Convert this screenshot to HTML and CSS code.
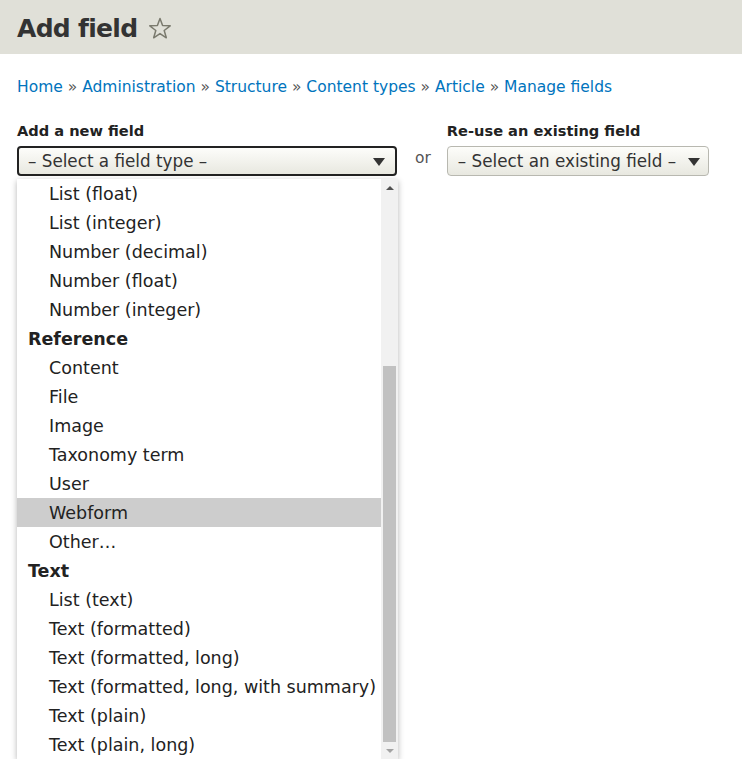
FILE: index.html
```html
<!DOCTYPE html>
<html>
<head>
<meta charset="utf-8">
<link rel="stylesheet" href="styles.css">
</head>
<body>
<header class="page-header">
  <h1 class="title">Add field</h1>
  <svg class="star" width="26" height="26" viewBox="0 0 26 26"><path d="M13 2.5 L15.6 9.6 L23.2 9.8 L17.2 14.5 L19.3 21.8 L13 17.6 L6.7 21.8 L8.8 14.5 L2.8 9.8 L10.4 9.6 Z" fill="none" stroke="#7a7a6e" stroke-width="1.5" stroke-linejoin="round"/></svg>
</header>
<main class="content">
  <nav class="breadcrumb">
    <a href="#">Home</a> » <a href="#">Administration</a> » <a href="#">Structure</a> » <a href="#">Content types</a> » <a href="#">Article</a> » <a href="#">Manage fields</a>
  </nav>
  <div class="form-row">
    <div class="field new-field">
      <label class="label">Add a new field</label>
      <div class="select focused">
        <span>– Select a field type –</span>
        <span class="arrow"></span>
      </div>
      <div class="listbox">
        <ul class="options">
          <li class="opt">List (float)</li>
          <li class="opt">List (integer)</li>
          <li class="opt">Number (decimal)</li>
          <li class="opt">Number (float)</li>
          <li class="opt">Number (integer)</li>
          <li class="group">Reference</li>
          <li class="opt">Content</li>
          <li class="opt">File</li>
          <li class="opt">Image</li>
          <li class="opt">Taxonomy term</li>
          <li class="opt">User</li>
          <li class="opt hl">Webform</li>
          <li class="opt">Other…</li>
          <li class="group">Text</li>
          <li class="opt">List (text)</li>
          <li class="opt">Text (formatted)</li>
          <li class="opt">Text (formatted, long)</li>
          <li class="opt">Text (formatted, long, with summary)</li>
          <li class="opt">Text (plain)</li>
          <li class="opt">Text (plain, long)</li>
        </ul>
        <div class="scrollbar">
          <span class="sb-up"></span>
          <div class="sb-track"><div class="sb-thumb"></div></div>
          <span class="sb-down"></span>
        </div>
      </div>
    </div>
    <div class="or">or</div>
    <div class="field existing-field">
      <label class="label">Re-use an existing field</label>
      <div class="select plain">
        <span>– Select an existing field –</span>
        <span class="arrow"></span>
      </div>
    </div>
  </div>
</main>
</body>
</html>
```
FILE: styles.css
```css
* { box-sizing: border-box; }
body {
  margin: 0;
  background: #fff;
  font-family: "DejaVu Sans", Verdana, sans-serif;
  color: #222;
}
.page-header {
  background: #e0e0d8;
  height: 54px;
  display: flex;
  align-items: center;
  padding: 3px 17px 0;
  gap: 10px;
}
.title {
  margin: 0;
  font-size: 25px;
  font-weight: bold;
  color: #333;
  letter-spacing: -0.7px;
}
.content { padding: 22px 17px 0; }
.breadcrumb {
  font-size: 15.5px;
  color: #555;
  line-height: 20px;
  margin-top: 1px;
}
.breadcrumb a { color: #0074bd; text-decoration: none; }
.form-row {
  display: flex;
  align-items: flex-start;
  margin-top: 24px;
}
.field { display: flex; flex-direction: column; }
.new-field { width: 381px; }
.label {
  font-weight: bold;
  font-size: 14.6px;
  line-height: 20px;
  margin-bottom: 5px;
  color: #222;
}
.select {
  height: 30px;
  border-radius: 4px;
  display: flex;
  align-items: center;
  justify-content: space-between;
  padding: 0 10px 0 9px;
  font-size: 16.8px;
  color: #333;
  background: linear-gradient(#fdfdfa, #e8e8e0);
}
.select.focused { border: 2px solid #222; width: 380px; padding-left: 9px; }
.select.plain { border: 1px solid #b8b8b0; width: 262px; padding-left: 10px; padding-right: 8px; }
.arrow {
  width: 0; height: 0;
  border-left: 6px solid transparent;
  border-right: 6px solid transparent;
  border-top: 8px solid #333;
  margin-top: 2px;
}
.or {
  font-size: 15.5px;
  color: #555;
  margin: 28px 16px 0 17px;
}
.listbox {
  margin-top: 3px;
  width: 381px;
  height: 580px;
  background: #fff;
  box-shadow: 0 2px 6px rgba(0,0,0,0.3);
  display: flex;
}
.options {
  list-style: none;
  margin: 0;
  padding: 0;
  flex: 1;
  font-size: 17.5px;
  color: #222;
}
.options li {
  height: 29px;
  line-height: 28px;
  padding-top: 1px;
  white-space: nowrap;
}
.opt { padding-left: 32px; }
.group { padding-left: 11px; font-weight: bold; }
.hl { background: #cdcdcd; }
.scrollbar {
  width: 17px;
  background: #f1f1f1;
  display: flex;
  flex-direction: column;
  align-items: center;
}
.sb-up, .sb-down {
  height: 17px;
  width: 17px;
  display: flex;
  align-items: center;
  justify-content: center;
}
.sb-up::after {
  content: "";
  border-left: 4px solid transparent;
  border-right: 4px solid transparent;
  border-bottom: 4px solid #505050;
}
.sb-down::after {
  content: "";
  border-left: 4px solid transparent;
  border-right: 4px solid transparent;
  border-top: 4px solid #a3a3a3;
}
.sb-track {
  flex: 1;
  width: 100%;
  padding: 0 2px;
  display: flex;
  flex-direction: column;
  justify-content: flex-end;
}
.sb-thumb {
  height: 376px;
  background: #c1c1c1;
}
```
